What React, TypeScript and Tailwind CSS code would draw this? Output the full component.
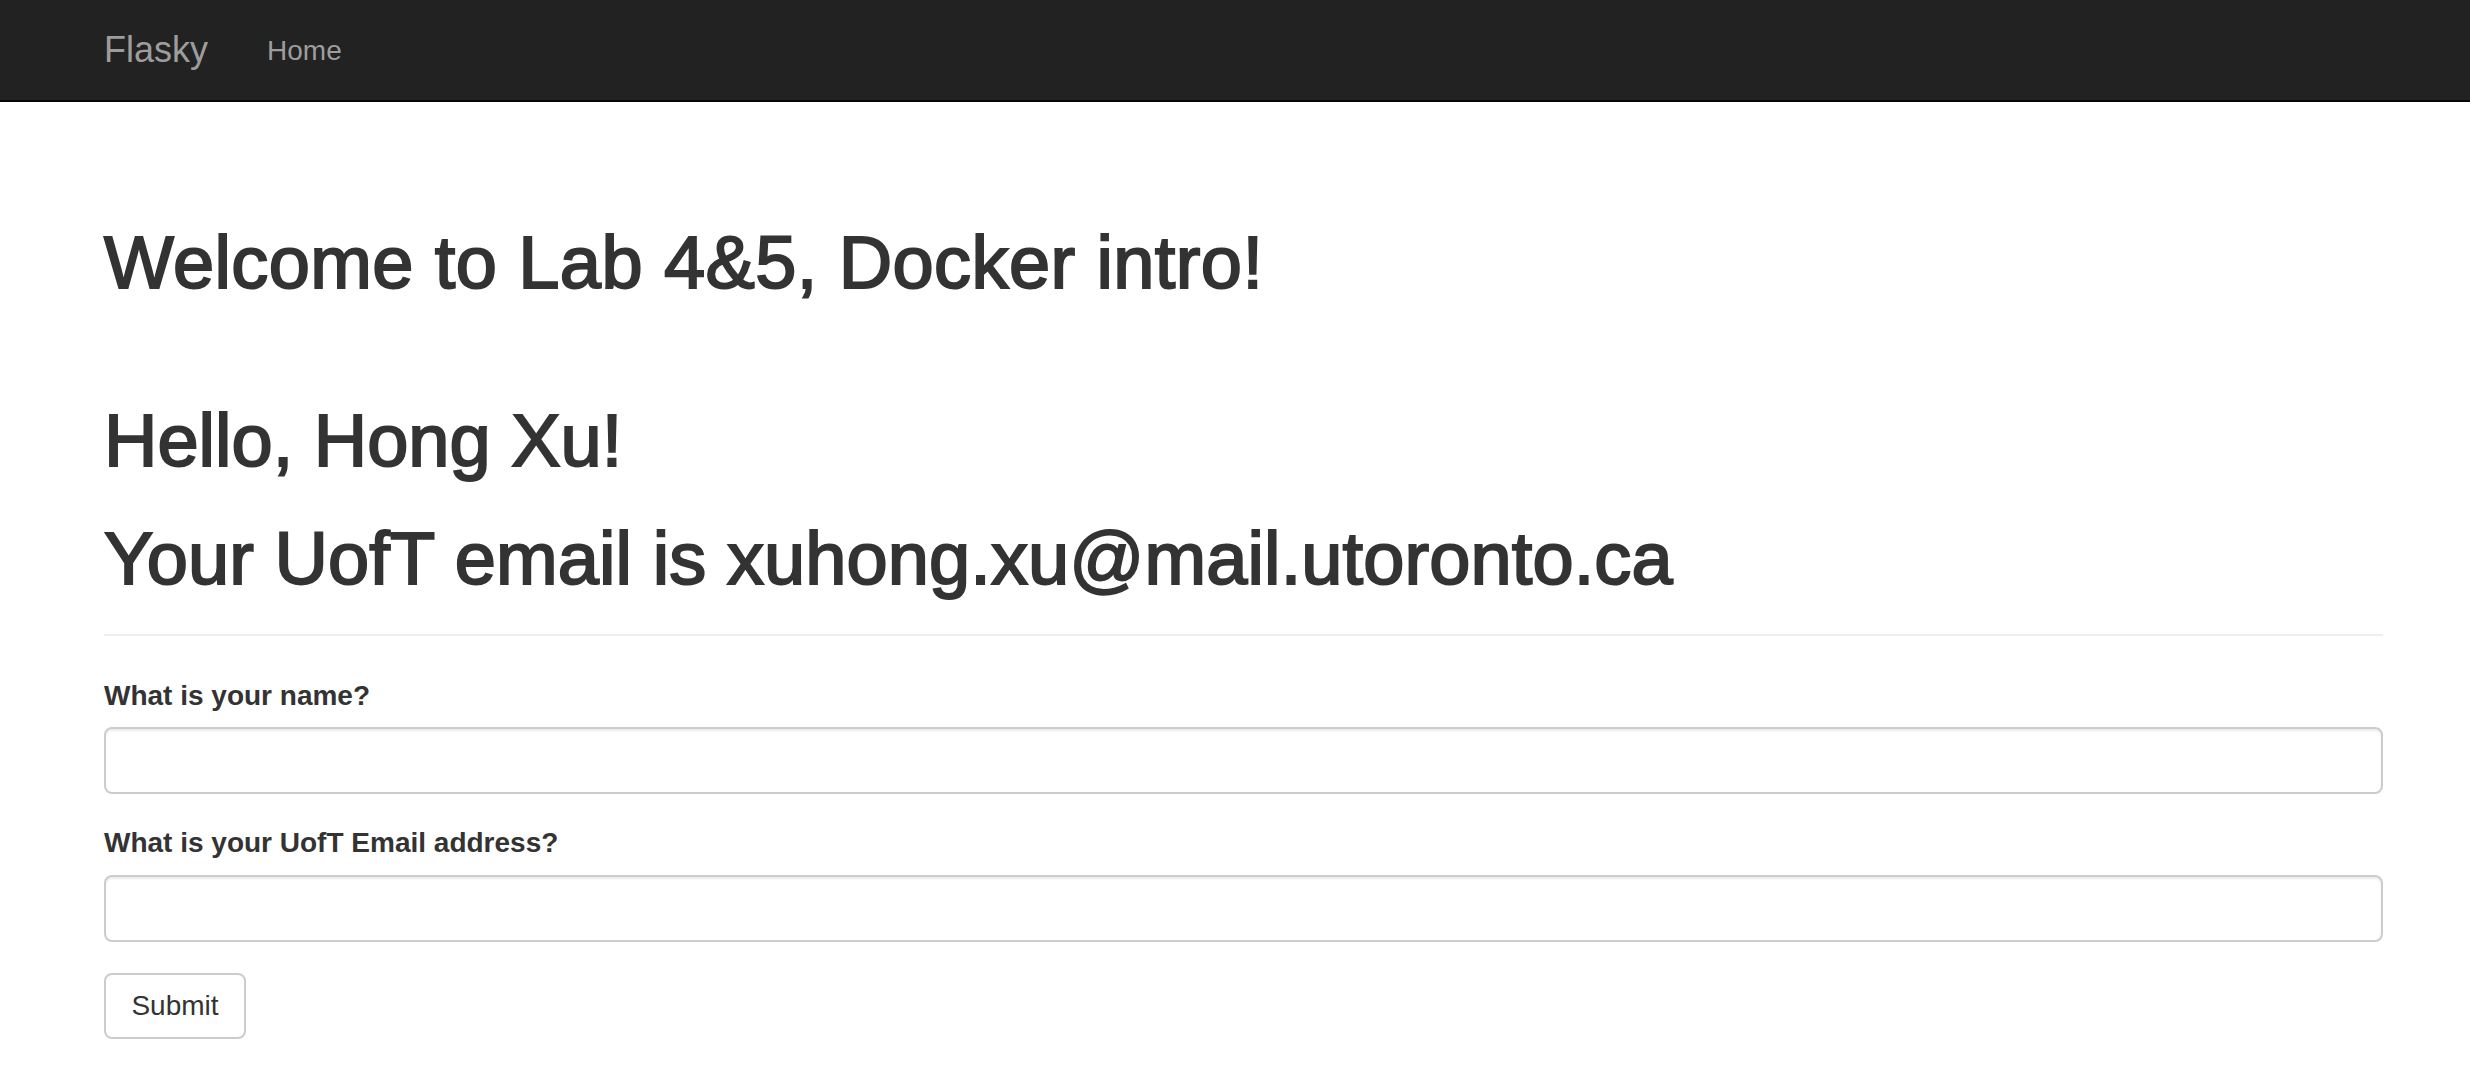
export default function App() {
  return (
    <div className="min-h-[1088px] bg-white text-[#333] font-['Liberation_Sans',Arial,sans-serif]">
      {/* Navbar */}
      <nav className="h-[102px] bg-[#222] border-b-2 border-[#080808]">
        <div className="flex items-start pl-[104px]">
          <a className="pt-[30px] text-[36px] leading-[40px] text-[#9d9d9d]">Flasky</a>
          <a className="ml-[59px] pt-[31px] text-[28px] leading-[40px] text-[#9d9d9d]">Home</a>
        </div>
      </nav>

      <main className="pl-[104px] pr-[87px]">
        <h1 className="mt-[121px] text-[74px] leading-[80px] tracking-[0.4px] [-webkit-text-stroke:2px_#333]">
          Welcome to Lab 4&amp;5, Docker intro!
        </h1>
        <h1 className="mt-[98px] text-[74px] leading-[80px] [-webkit-text-stroke:2px_#333]">
          Hello, Hong Xu!
        </h1>
        <h1 className="mt-[38px] text-[74px] leading-[80px] tracking-[0.1px] [-webkit-text-stroke:2px_#333]">
          Your UofT email is xuhong.xu@mail.utoronto.ca
        </h1>
        <hr className="mt-[35px] border-0 h-[2px] bg-[#eee]" />

        <form className="flex flex-col">
          <label className="mt-[40px] text-[28px] leading-[40px] font-bold">What is your name?</label>
          <input
            type="text"
            className="mt-[11px] h-[67px] w-full rounded-[8px] border-2 border-[#ccc] bg-white shadow-[inset_0_2px_2px_rgba(0,0,0,0.075)] outline-none"
          />
          <label className="mt-[29px] text-[28px] leading-[40px] font-bold">What is your UofT Email address?</label>
          <input
            type="text"
            className="mt-[12px] h-[67px] w-full rounded-[8px] border-2 border-[#ccc] bg-white shadow-[inset_0_2px_2px_rgba(0,0,0,0.075)] outline-none"
          />
          <div className="mt-[31px]">
            <button
              type="button"
              className="flex h-[66px] w-[142px] items-center justify-center rounded-[8px] border-2 border-[#ccc] bg-white text-[28px] text-[#333]"
            >
              Submit
            </button>
          </div>
        </form>
      </main>
    </div>
  );
}
